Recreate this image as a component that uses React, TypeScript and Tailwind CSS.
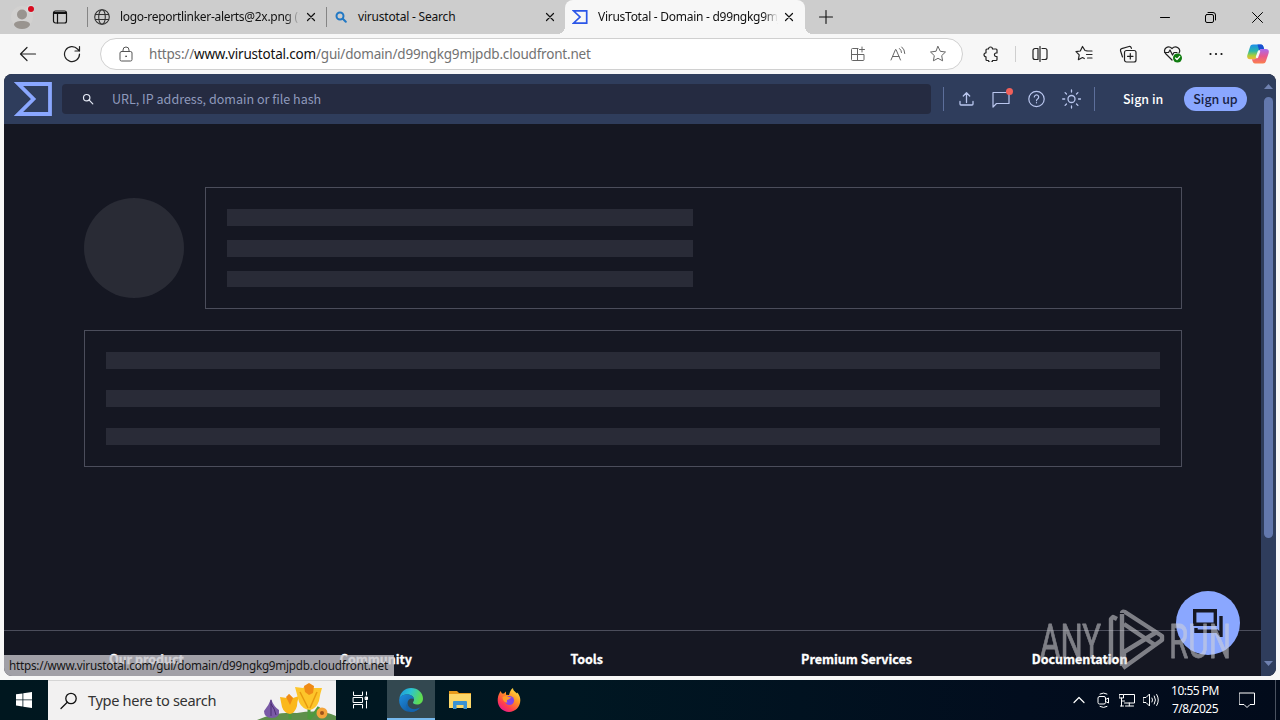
import type { ReactNode } from "react";
import clsx from "clsx";

const PAGE_URL = "https://www.virustotal.com/gui/domain/d99ngkg9mjpdb.cloudfront.net";
const FOOTER = ["Our product", "Community", "Tools", "Premium Services", "Documentation"];

function Icon({ size = 20, className, sw = 1, children }: { size?: number; className?: string; sw?: number; children: ReactNode }) {
  return (
    <svg
      width={size}
      height={size}
      viewBox={`0 0 ${size} ${size}`}
      fill="none"
      stroke="currentColor"
      strokeWidth={sw}
      strokeLinecap="round"
      strokeLinejoin="round"
      className={clsx("shrink-0", className)}
    >
      {children}
    </svg>
  );
}

function Cell({ className, children }: { className?: string; children: ReactNode }) {
  return <div className={clsx("flex shrink-0 items-center justify-center", className)}>{children}</div>;
}

function CloseX({ className }: { className?: string }) {
  return (
    <Icon size={10} sw={1.2} className={className}>
      <path d="M1.500 1.500l7 7M8.500 1.500l-7 7" />
    </Icon>
  );
}

function TabBar() {
  return (
    <div className="flex h-[34px] shrink-0 items-center bg-[#cdcdcd] text-[12px] text-[#111]">
      <Cell className="w-11">
        <svg width="24" height="28" viewBox="0 0 24 28">
          <circle cx="12" cy="14" r="11" fill="#d2d1d0" />
          <circle cx="12" cy="11.5" r="5" fill="#99948f" />
          <path d="M4 22c0-3 3-4 8-4s8 1 8 4c-1.500 2.500-4 4-8 4s-6.500-1.500-8-4z" fill="#99948f" />
          <circle cx="21" cy="6" r="4.300" fill="#d9d9d9" />
          <circle cx="21" cy="6" r="3" fill="#d80b1f" />
        </svg>
      </Cell>
      <Cell className="w-8">
        <Icon size={16} sw={1.2}>
          <rect x="1.500" y="2" width="13" height="12" rx="2" />
          <path d="M2 3.500h12M2 4.500h12M5.500 5v9" />
        </Icon>
      </Cell>
      <div className="ml-[11px] h-5 w-px bg-[#858585]" />
      <Icon size={16} sw={1.1} className="ml-1.5 text-[#333]">
        <circle cx="8" cy="8" r="7.300" />
        <ellipse cx="8" cy="8" rx="3.300" ry="7.300" />
        <path d="M1.500 5.500h13M1.500 10.500h13" />
      </Icon>
      <div className="ml-[10px] w-[180px] overflow-hidden whitespace-nowrap tracking-[-0.3px] [mask-image:linear-gradient(to_right,#000_92%,transparent)]">
        logo-reportlinker-alerts@2x.png (1
      </div>
      <CloseX className="ml-[6px]" />
      <div className="ml-[10px] h-5 w-px bg-[#858585]" />
      <Icon size={12} sw={2} className="ml-2 text-[#2178c4]">
        <circle cx="5" cy="5" r="3.500" />
        <path d="M7.800 7.800l3 3" />
      </Icon>
      <div className="ml-[11px] w-[187px] tracking-[-0.2px]">virustotal - Search</div>
      <CloseX />
      <div className="relative ml-[10px] flex h-full w-[240px] items-center rounded-t-lg bg-[#f7f7f7]">
        <svg width="16" height="16" viewBox="0 0 16 16" className="ml-[7px]" fill="none" stroke="#2b56e8" strokeWidth="1.700">
          <path d="M1.500 1.800h13.200v12.400H1.500L8 8z" />
        </svg>
        <div className="ml-[10px] w-[180px] overflow-hidden whitespace-nowrap tracking-[-0.27px] [mask-image:linear-gradient(to_right,#000_92%,transparent)]">
          VirusTotal - Domain - d99ngkg9mjpdb
        </div>
        <CloseX className="ml-[6px]" />
        <div className="absolute -left-2 bottom-0 h-2 w-2 bg-[radial-gradient(circle_at_0_0,transparent_8px,#f7f7f7_8px)]" />
        <div className="absolute -right-2 bottom-0 h-2 w-2 bg-[radial-gradient(circle_at_100%_0,transparent_8px,#f7f7f7_8px)]" />
      </div>
      <Icon size={14} sw={1.1} className="ml-[14px]">
        <path d="M7 .5v13M.5 7h13" />
      </Icon>
      <div className="ml-auto flex text-black">
        <Cell className="w-[46px]">
          <Icon size={10}>
            <path d="M.5 5.500h9" />
          </Icon>
        </Cell>
        <Cell className="w-[46px]">
          <Icon size={11} className="-ml-px">
            <rect x=".5" y="2.500" width="8" height="8" rx="1.500" />
            <path d="M3 .5h5a2.500 2.500 0 0 1 2.500 2.500v5" />
          </Icon>
        </Cell>
        <Cell className="w-[46px]">
          <Icon size={11}>
            <path d="M.5 .5l10 10M10.500 .5l-10 10" />
          </Icon>
        </Cell>
      </div>
    </div>
  );
}

function Toolbar() {
  return (
    <div className="flex h-10 shrink-0 items-center bg-[#f7f7f7] text-[#222]">
      <Cell className="ml-[6px] w-11">
        <Icon size={18} sw={1.200}>
          <path d="M16.500 9H1.500M8 2.500L1.500 9 8 15.500" />
        </Icon>
      </Cell>
      <Cell className="w-11">
        <Icon size={18} sw={1.200}>
          <path d="M16.500 9A7.500 7.500 0 1 1 14.500 4l2 2M16.500 1.500V6H12" />
        </Icon>
      </Cell>
      <div className="ml-[6px] flex h-8 w-[863px] items-center rounded-full border border-[#d0d0d0] bg-white text-[#666]">
        <Icon size={16} className="ml-[17px] text-[#555]">
          <rect x="2" y="5.500" width="12" height="9.500" rx="1.500" />
          <path d="M5 5.500V4a3 3 0 0 1 6 0v1.500" />
          <circle cx="8" cy="10.300" r=".5" />
        </Icon>
        <div className="ml-[15px] whitespace-nowrap text-[13.5px] tracking-[-0.195px] text-[#727272]">
          https://<span className="text-[#111]">www.virustotal.com</span>/gui/domain/d99ngkg9mjpdb.cloudfront.net
        </div>
        <div className="ml-auto mr-[4px] flex">
          <Cell className="w-10">
            <Icon size={16}>
              <path d="M8 2.500H2.500a1 1 0 0 0-1 1v10a1 1 0 0 0 1 1h10.500a1 1 0 0 0 1-1V8.500H1.500M7.500 2.500v12M12 1v5M9.500 3.500h5" />
            </Icon>
          </Cell>
          <Cell className="w-10">
            <Icon size={16}>
              <path d="M1 14L5.500 3.500h.5L10.500 14M2.500 10.500h6.500M9.500 2.500q2 1.500 2 4M11.800 1q3 2.500 3 6.500" />
            </Icon>
          </Cell>
          <Cell className="w-10">
            <Icon size={18}>
              <path d="M9 1.500l2.300 4.800 5.200.7-3.800 3.600.9 5.200L9 13.300l-4.600 2.500.9-5.200L1.500 7l5.200-.7z" />
            </Icon>
          </Cell>
        </div>
      </div>
      <Cell className="ml-[6px] w-11">
        <Icon size={16} sw={1.200}>
          <path d="M5.500 3a2 2 0 0 1 4 0H13a1 1 0 0 1 1 1v3h-1.200a1.800 1.800 0 0 0 0 3.500H14V13.500a1 1 0 0 1-1 1H9.500a2 2 0 0 1-4 0H4a1 1 0 0 1-1-1v-2.700a2 2 0 0 1 0-4V4a1 1 0 0 1 1-1z" />
        </Icon>
      </Cell>
      <div className="mx-[2px] h-4 w-px bg-[#cfcfcf]" />
      <Cell className="w-11">
        <Icon size={16} sw={1.200} className="-ml-px">
          <path d="M6 2.500H3a2 2 0 0 0-2 2v7a2 2 0 0 0 2 2h3zM10 2.500h3a2 2 0 0 1 2 2v7a2 2 0 0 1-2 2h-3M8 .5v15" />
        </Icon>
      </Cell>
      <Cell className="w-11">
        <Icon size={18} sw={1.200}>
          <path d="M12 5.800L10 5.500 7.500 1.500 5.300 6 1 6.700l3.200 3.200-.8 4.800 4.100-2.200 1.800 1M11.500 6H17M11.500 9.500H17M12.500 13H17" />
        </Icon>
      </Cell>
      <Cell className="w-11">
        <Icon size={18} sw={1.200} className="-ml-px">
          <rect x="5.500" y="5.500" width="11.500" height="11.500" rx="2" />
          <path d="M11.300 8.500v5.500M8.500 11.300H14M3.500 12l-2-6.200a1.800 1.800 0 0 1 1.200-2.200L10 1.500a1.800 1.800 0 0 1 2.200 1.200l.2.700" />
        </Icon>
      </Cell>
      <Cell className="w-[45px]">
        <Icon size={20} sw={1.200}>
          <path d="M9 16L2.500 9.500C-.5 5 5 .5 9 4.500c4-4 9.500.5 7 4.500M1.500 8.500h4l1.500-2.500 2.500 5 1.500-2.500h3" />
          <circle cx="14.500" cy="14" r="4.500" fill="#107c10" stroke="none" />
          <path d="M12.500 14l1.500 1.500 2.700-3" stroke="#fff" />
        </Icon>
      </Cell>
      <Cell className="w-[42px]">
        <svg width="14" height="4" viewBox="0 0 14 4" fill="#111">
          <circle cx="1.500" cy="2" r="1.100" />
          <circle cx="7" cy="2" r="1.100" />
          <circle cx="12.500" cy="2" r="1.100" />
        </svg>
      </Cell>
      <Cell className="w-[42px]">
        <Copilot />
      </Cell>
    </div>
  );
}

function Copilot() {
  return (
    <svg width="22" height="20" viewBox="0 0 22 20">
      <defs>
        <linearGradient id="cpA" x1="0" y1="0" x2="0" y2="1">
          <stop offset="0" stopColor="#1d8fea" />
          <stop offset=".45" stopColor="#2bb7a9" />
          <stop offset=".75" stopColor="#a9cf3a" />
          <stop offset="1" stopColor="#f5b53a" />
        </linearGradient>
        <linearGradient id="cpB" x1="0" y1="0" x2="0" y2="1">
          <stop offset="0" stopColor="#a86bf0" />
          <stop offset=".5" stopColor="#e8588f" />
          <stop offset="1" stopColor="#fb7f4c" />
        </linearGradient>
      </defs>
      <path d="M6 .5h8c1.500 0 2 1 2.500 2.500l.6 2H15c-1.700 0-2.500.8-3 2.500l-1.800 5.500c-.5 1.500-1.500 2.200-3 2.200H3C.5 15.200-.3 13.500.4 11L3 3C3.500 1.200 4.500.5 6 .5z" fill="url(#cpA)" />
      <path d="M10.500 .5H14c1.500 0 2 1 2.500 2.500l.6 2H15c-1.400 0-2.300.5-2.800 1.800z" fill="#1a4fd0" />
      <path d="M16 19.500H8c-1.500 0-2-1-2.500-2.500l-.6-1.800H7c1.700 0 2.500-.8 3-2.500L11.800 7.200C12.300 5.700 13.300 5 14.800 5H19c2.500 0 3.300 1.700 2.600 4.200L19 17c-.5 1.700-1.500 2.500-3 2.500z" fill="url(#cpB)" />
      <path d="M12 7.500L10 13" stroke="#f7f7f7" strokeWidth="2.400" strokeLinecap="round" />
    </svg>
  );
}

function SiteHeader() {
  return (
    <div className="flex h-[50px] items-center bg-[#2f3d5c]">
      <svg width="38" height="34" viewBox="0 0 38 34" className="ml-[10px] shrink-0" fill="none" stroke="#8aa7ff" strokeWidth="3.800">
        <path d="M4.500 2H36v30H4.500L19.500 17z" />
      </svg>
      <div className="ml-[10px] flex h-[30px] w-[869px] shrink-0 items-center rounded-[4px] bg-[#252b41]">
        <Icon size={12} sw={1.200} className="ml-5 text-[#e4e8f4]">
          <circle cx="4.700" cy="4.700" r="3.200" />
          <path d="M7.200 7.200l3.600 3.600" />
        </Icon>
        <span className="ml-[18px] text-[12.55px] leading-5 text-[#8f9abc]">URL, IP address, domain or file hash</span>
      </div>
      <div className="ml-[12px] h-6 w-px bg-[#5d6f9b]" />
      <div className="ml-[5px] flex text-[#b9c6ee]">
        <Cell className="w-[35px]">
          <Icon size={16} sw={1.300}>
            <path d="M7.500 11.500V2M4.300 5L7.500 1.800 10.700 5M1 10.500V13a1 1 0 0 0 1 1h11a1 1 0 0 0 1-1v-2.500" />
          </Icon>
        </Cell>
        <Cell className="relative w-[35px]">
          <Icon size={18} sw={1.200} className="-ml-px">
            <path d="M1 17V2.500h16v11H4.500z" />
          </Icon>
          <i className="absolute -top-px right-[6px] h-[7px] w-[7px] rounded-full bg-[#f0605a]" />
        </Cell>
        <Cell className="w-[35px]">
          <Icon size={18} sw={1.200}>
            <circle cx="8.500" cy="9" r="7.700" />
            <path d="M6.300 7a2.200 2.200 0 1 1 3.300 2c-.8.500-1.100.8-1.100 1.700M8.500 12.600v.2" />
          </Icon>
        </Cell>
        <Cell className="w-[35px]">
          <Icon size={20} sw={1.300}>
            <circle cx="9.500" cy="10" r="3.500" />
            <path d="M9.500 1v2M9.500 17v2M.7 10h2M16.500 10h2M3.100 3.600L4.500 5M14.500 15l1.400 1.400M3.100 16.400L4.500 15M14.500 5l1.400-1.400" />
          </Icon>
        </Cell>
      </div>
      <div className="ml-[5px] h-6 w-px bg-[#5d6f9b]" />
      <span className="ml-[28px] w-[61px] whitespace-nowrap text-[12.45px] font-medium leading-5 text-white">Sign in</span>
      <div className="flex h-6 w-[63px] items-center justify-center rounded-full bg-[#8aa7ff] text-[12.45px] font-medium leading-5 text-[#172144]">
        Sign up
      </div>
    </div>
  );
}

function Bar({ className = "h-[17px]" }: { className?: string }) {
  return <div className={clsx("shrink-0 bg-[#292b37]", className)} />;
}

function SitePage() {
  return (
    <div className="relative mx-1 flex h-[602px] shrink-0 overflow-hidden rounded-lg bg-[#151722] font-['Noto_Sans_CJK_SC','Noto_Sans',sans-serif]">
      <div className="flex w-[1257px] shrink-0 flex-col">
        <SiteHeader />
        <div className="flex h-[506px] flex-col pl-20 pt-[63px]">
          <div className="flex gap-[21px]">
            <div className="mt-[11px] h-[100px] w-[100px] shrink-0 rounded-full bg-[#292b35]" />
            <div className="flex h-[122px] w-[977px] flex-col gap-[14px] border border-[#4b4d5b] p-[21px]">
              <Bar className="h-[17px] w-[466px]" />
              <Bar className="h-[17px] w-[466px]" />
              <Bar className="h-4 w-[466px]" />
            </div>
          </div>
          <div className="mt-[21px] flex h-[137px] w-[1098px] flex-col gap-[21px] border border-[#4b4d5b] p-[21px]">
            <Bar />
            <Bar />
            <Bar />
          </div>
        </div>
        <div className="grid grow grid-cols-[repeat(5,230.700px)] border-t border-[#4b4d5b] pl-[105px] pt-[18px] text-[12.5px] font-bold leading-5 text-white [-webkit-text-stroke:0.3px_#fff]">
          {FOOTER.map((t) => (
            <div key={t}>{t}</div>
          ))}
        </div>
      </div>
      <div className="flex w-[15px] flex-col items-center bg-[#2f3d5c]">
        <svg width="9" height="5" viewBox="0 0 9 5" className="mt-[10px]">
          <path d="M0 5L4.500 0 9 5z" fill="#6f81b0" />
        </svg>
        <div className="mt-[8px] h-[441px] w-[9px] rounded-full bg-[#6378ad]" />
        <svg width="9" height="5" viewBox="0 0 9 5" className="mb-[10px] mt-auto">
          <path d="M0 0h9L4.500 5z" fill="#6f81b0" />
        </svg>
      </div>

      {/* link preview shown by the browser */}
      <div className="absolute bottom-0 left-0 flex h-[21px] w-[390px] items-center whitespace-nowrap bg-[#c4c3c9]/80 pl-[5px] font-['Noto_Sans',sans-serif] text-[11.7px] tracking-[-0.22px] text-[#151515]">
        {PAGE_URL}
      </div>

      <div className="absolute left-[1172px] top-[517px] flex h-16 w-16 items-center justify-center rounded-full bg-[#8aa7ff]">
        <svg width="30" height="28" viewBox="0 0 30 28" fill="none" stroke="#161723" strokeWidth="3.400">
          <path d="M1.700 1.700h20.600v13.600H1.700zM3 19v3.300h22M28 7v20l-4-5" />
        </svg>
      </div>
      <Watermark />
    </div>
  );
}

function Watermark() {
  return (
    <svg
      width="200"
      height="68"
      viewBox="0 0 200 68"
      className="absolute left-[1032px] top-[533px] overflow-visible opacity-55"
      fill="none"
      stroke="#d4d4d8"
      strokeWidth="4.400"
      strokeLinejoin="round"
    >
      <g fill="#d4d4d8" strokeWidth=".8" fontFamily="Roboto" fontWeight="400" fontSize="48">
        <text x="4" y="51" textLength="61" lengthAdjust="spacingAndGlyphs">ANY</text>
        <text x="133" y="51" textLength="62" lengthAdjust="spacingAndGlyphs">RUN</text>
      </g>
      <path d="M81 12l-4-2-2 2v41l-3 3M86 7v52M86 6q0-2 3-1l37 24v4L87 61M88 17l31 21M88 58V45l31-19" />
    </svg>
  );
}

function Flowers() {
  return (
    <svg width="79" height="38" viewBox="0 0 79 38" className="ml-auto shrink-0">
      <path d="M0 38q20-9 40-7 24-4 39 3v4z" fill="#5e8f4b" />
      <path d="M14 17q-2 6-7 12 0 7 8 7 8 0 7-8-5-3-8-11z" fill="#7a5aa6" />
      <path d="M14 18v16M14 22q4 5 5 11" stroke="#4b2d73" fill="none" />
      <path d="M33 28v9M52 24v13M52 37q6-5 10-12" stroke="#4d9a3d" strokeWidth="3" fill="none" />
      <path d="M23 15l7 1 2-4 4 4 6-2q-2 6-2 10-2 7-7 8-6-1-8-7z" fill="#fbb81b" />
      <path d="M29 15l3-3 4 4-3 7z" fill="#ef8a16" />
      <path d="M38 5l8 1 5-4 6 4 8 0q-2 6-3 13-3 8-9 9-8-1-11-8z" fill="#fdc52a" />
      <path d="M47 4l5-3 5 3-1 7-4 2-4-3z" fill="#ef8a16" />
      <path d="M43 10l8 16M60 10l-7 16" stroke="#e7990f" strokeWidth="1.5" />
      <circle cx="65" cy="31" r="5.500" fill="#f4a43a" />
      <circle cx="65" cy="31" r="2" fill="#9c531b" />
    </svg>
  );
}

function EdgeLogo() {
  return (
    <svg width="24" height="24" viewBox="0 0 24 24">
      <defs>
        <linearGradient id="edA" x1="0" y1="0" x2="1" y2=".3">
          <stop offset="0" stopColor="#1b93dc" />
          <stop offset=".5" stopColor="#2bc3d2" />
          <stop offset="1" stopColor="#5fdc50" />
        </linearGradient>
        <linearGradient id="edB" x1="0" y1="0" x2="1" y2="1">
          <stop offset="0" stopColor="#1c8ee0" />
          <stop offset="1" stopColor="#114a8b" />
        </linearGradient>
      </defs>
      <path d="M.3 11C1 4.500 6 0 12 0c7 0 12 5 12 10.500 0 4-3 6-6 6s-4-1.200-4-2c0-.7 1-1 1-3 0-2.500-2.500-5-6.500-5C4.500 6.500 1 8.500.3 11z" fill="url(#edA)" />
      <path d="M.2 11.500C.5 8.500 4 6.500 8.500 6.500c4 0 6.300 2.500 6.500 4.800-2.500-2-6.500 0-6.500 4 0 5 6 8 12.500 4.200-2 2.900-5.300 4.500-9 4.500C5 24-.3 18.500.2 11.500z" fill="url(#edB)" />
      <path d="M8.500 15.300c0 5 6 8 12.500 4.200-2 2.900-5.300 4.500-9 4.500-4-1.500-6-6-3.500-8.700z" fill="#1464ad" />
    </svg>
  );
}

function FirefoxLogo() {
  return (
    <svg width="24" height="24" viewBox="0 0 24 24">
      <defs>
        <linearGradient id="ffA" x1=".9" y1="0" x2=".2" y2="1">
          <stop offset="0" stopColor="#fff04a" />
          <stop offset=".4" stopColor="#ff9524" />
          <stop offset=".75" stopColor="#ff3c4e" />
          <stop offset="1" stopColor="#e4149a" />
        </linearGradient>
      </defs>
      <path d="M2.500 5l1-2 1.500 2.500h2L9 3.500v3.300L12 7c1-3 1.500-5.500 4-7 0 3 3 4 4 5.500l.5-1C23 8 23.300 10 23.300 12.500 23.300 19 18 24 12 24S.7 19 .7 12.500C.7 9.500 1.200 7.500 2.500 5z" fill="url(#ffA)" />
      <circle cx="12.500" cy="12.500" r="4.600" fill="#8045e8" />
      <path d="M5.500 9q3-2 6 0l3 .5-3 2c-2 .2-2 2-1 3-3 0-5-2-5-5.500z" fill="#ff9b27" />
    </svg>
  );
}

function Taskbar() {
  return (
    <div className="flex h-10 shrink-0 items-center bg-[linear-gradient(to_right,#00171f,#001722_45%,#020d1e_80%,#020b1b)] text-white">
      <Cell className="w-12">
        <svg width="16" height="16" viewBox="0 0 16 16" fill="#fff">
          <path d="M0 2.300L6.500 1.400V7.500H0zM7.300 1.200L16 0v7.500H7.300zM0 8.300h6.500v6.200L0 13.600zM7.300 8.300H16V16l-8.700-1.200z" />
        </svg>
      </Cell>
      <div className="flex h-10 w-[288px] items-end border-t border-[#d5d5d5] bg-[#f2f1f1] text-[#333]">
        <Icon size={18} sw={1.300} className="ml-3 self-center text-[#111]">
          <circle cx="11" cy="6.500" r="5.200" />
          <path d="M7.300 10.200L1 16.500" />
        </Icon>
        <span className="ml-[10px] self-center whitespace-nowrap text-[14.6px] tracking-[-0.33px]">Type here to search</span>
        <Flowers />
      </div>
      <Cell className="w-[51px]">
        <Icon size={18} className="-ml-[2px]">
          <path d="M1.500 1v3.500h9V1M1.500 17v-3.500h9V17M1.500 6.500h9v5h-9zM14.500 1v3M14.500 10v7" />
          <path d="M13.500 6h2v2.500h-2z" fill="#fff" />
        </Icon>
      </Cell>
      <Cell className="h-10 w-12 border-b-2 border-[#76b9ed] bg-[#334850] pt-0.5">
        <EdgeLogo />
      </Cell>
      <Cell className="w-[49px]">
        <svg width="22" height="20" viewBox="0 0 22 20">
          <path d="M0 1h8l2 2h12v5H0z" fill="#e79b1c" />
          <path d="M0 4h22v14H0z" fill="#fcd769" />
          <path d="M4 12q0-1 1-1h12q1 0 1 1v7h-3.500v-4h-7v4H4z" fill="#3a92d4" />
        </svg>
      </Cell>
      <Cell className="w-[50px]">
        <FirefoxLogo />
      </Cell>
      <div className="ml-auto flex h-10 items-center">
        <Cell className="w-6">
          <Icon size={12} sw={1.200}>
            <path d="M1 8.500l5-5 5 5" />
          </Icon>
        </Cell>
        <Cell className="w-6">
          <Icon size={16}>
            <rect x="3" y="4.500" width="7.500" height="7.500" rx="1.500" />
            <path d="M10.500 7.500l3-1.500v5l-3-1.500M5 2q3.500-2 7 0M5 14.500q3.500 2 7 0" />
          </Icon>
        </Cell>
        <Cell className="w-6">
          <Icon size={16}>
            <path d="M5 2.500h10.500v8.500H5.500M10.300 11v2.800M6.500 14h8M.5 2.500h4v3.500h-4zM2.500 6v8M2.500 9h3M1.500 14h3" />
          </Icon>
        </Cell>
        <Cell className="w-6">
          <Icon size={16}>
            <path d="M.5 5.500h2.500l3.500-3.500v12L3 10.500H.5zM9 6q1.200 2 0 4M11.300 4q2.400 4 0 8M13.700 2.500q3.300 5.500 0 11" />
          </Icon>
        </Cell>
        <div className="w-[64px] whitespace-nowrap text-center text-[12px] leading-[18px] tracking-[-0.5px]">
          <div>10:55 PM</div>
          <div>7/8/2025</div>
        </div>
        <Cell className="w-10">
          <Icon size={16}>
            <path d="M.5 1h15v11.500H11l-3 3-3-3H.5z" />
          </Icon>
        </Cell>
        <div className="ml-[8px] mr-1 h-10 w-px bg-[#4a5260]" />
      </div>
    </div>
  );
}

export default function App() {
  return (
    <div className="flex h-[720px] w-[1280px] flex-col overflow-hidden bg-[#f7f7f7] font-['Noto_Sans',sans-serif]">
      <TabBar />
      <Toolbar />
      <SitePage />
      <div className="h-1 shrink-0" />
      <Taskbar />
    </div>
  );
}
